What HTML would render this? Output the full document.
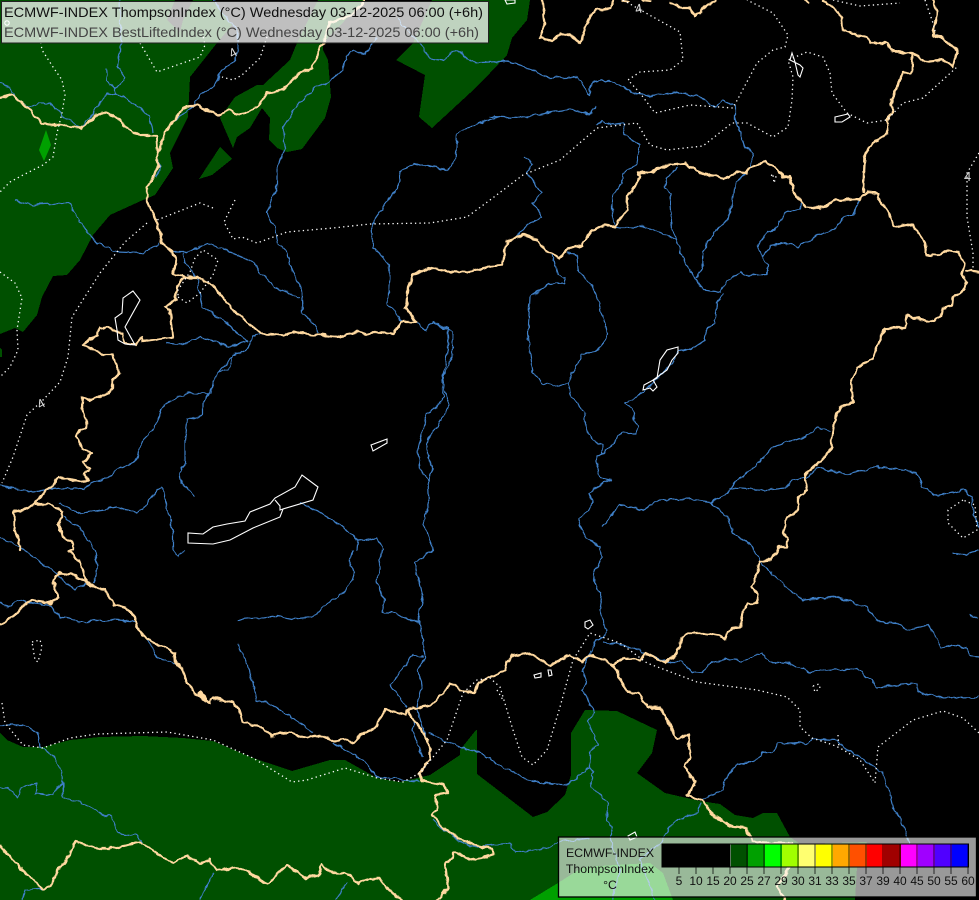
<!DOCTYPE html>
<html lang="en"><head><meta charset="utf-8"><title>ECMWF-INDEX ThompsonIndex</title>
<style>
html,body{margin:0;padding:0;background:#000;width:979px;height:900px;overflow:hidden}
svg{display:block}
text{font-family:"Liberation Sans",sans-serif}
.g{fill:#005000;shape-rendering:crispEdges}
.r{fill:none;stroke:#3f80c8;stroke-width:1.2;stroke-linejoin:round}
.b{fill:none;stroke:#ffd9a0;stroke-width:2.3;stroke-linejoin:round;stroke-linecap:round}
.d{fill:none;stroke:#fff;stroke-width:1.3;stroke-dasharray:1.3 3.2}
.w{fill:none;stroke:#fff;stroke-width:1.1}
.t{font-size:12.3px;fill:#111}
.n{font-size:12px;fill:#111;text-anchor:middle}
</style></head><body>
<svg width="979" height="900" viewBox="0 0 979 900" xmlns="http://www.w3.org/2000/svg">
<defs>
<filter id="wig" filterUnits="userSpaceOnUse" x="0" y="0" width="979" height="900" color-interpolation-filters="sRGB">
<feTurbulence type="fractalNoise" baseFrequency="0.13" numOctaves="2" seed="4" result="n"/>
<feDisplacementMap in="SourceGraphic" in2="n" scale="5" xChannelSelector="R" yChannelSelector="G"/>
</filter>
</defs>
<rect width="979" height="900" fill="#000"/>
<!-- green areas -->
<polygon class="g" points="0,0 175,0 167,20 180,32 183,20 193,0 212,0 232,25 217,43 190,77 188,117 170,153 173,168 155,195 143,200 110,215 93,235 80,260 67,275 53,276 42,297 37,315 23,332 15,328 0,334"/>
<polygon class="g" points="0,348 2,350 2,357 0,357"/>
<polygon fill="#00a000" points="46,130 39,150 44,161 51,145"/>
<polygon class="g" points="318,0 297,43 290,60 263,85 257,85 235,97 220,118 233,148 237,137 250,128 262,108 270,118 269,140 277,148 287,152 302,149 325,118 331,97 328,60 323,50 323,43 365,0"/>
<polygon class="g" points="220,147 232,159 212,175 199,179"/>
<polygon class="g" points="432,0 413,43 396,60 425,75 419,117 432,128 470,93 490,73 507,55 512,38 527,20 530,0"/>
<polygon class="g" points="0,733 7,740 23,747 43,747 70,740 100,737 143,736 183,738 213,741 253,758 292,771 330,760 345,760 377,778 400,782 430,775 460,755 460,750 476,730 477,730 477,774 533,817 547,812 565,795 571,775 571,733 585,710 617,711 657,730 652,753 637,773 665,793 700,801 720,804 735,815 753,818 763,813 777,813 790,837 800,844 867,842 857,867 855,900 0,900"/>
<polygon fill="#00a000" style="shape-rendering:crispEdges" points="530,900 558,883 583,867 650,863 663,873 673,900"/>

<!-- rivers -->
<g class="r" filter="url(#wig)">
<polyline points="0,83 10,87 15,97 28,107 37,103 50,103 62,115 80,128 90,118 100,103 107,93 123,97 140,108 150,117 153,132"/>
<polyline points="120,0 121,43 118,67 125,78 115,88 107,80 106,68"/>
<polyline points="115,88 115,96"/>
<polyline points="213,0 238,33 238,50 235,60 223,70 213,87 200,95 193,107 177,118 170,125 163,140 157,153 160,170 155,177"/>
<polyline points="377,37 365,55 355,50 347,55 343,70 328,82 315,88 300,102 283,127 285,147 277,170 277,190 272,200 267,213 275,230 278,243 288,253 290,265 297,280 302,288 303,313 317,327 318,333"/>
<polyline points="500,117 480,123 457,133 455,160 447,170 413,163 400,173 398,187 388,200 372,223 373,247 390,265 388,303 402,322"/>
<polyline points="397,18 423,47 430,58 443,60 453,51 460,52 473,63 490,62 507,61 527,68 550,78 577,77 590,95 592,83 610,80 633,93 653,96 677,92 697,96 715,107 722,100 735,107 735,120 740,133 745,147 753,153 747,173 735,182 732,203 728,220 713,233 703,252 702,267 697,278"/>
<polyline points="490,117 520,118 570,109 590,115 596,106"/>
<polyline points="597,125 602,121 610,125 623,123 625,135 640,145 637,163 623,174 622,183 612,197 612,213 615,227"/>
<polyline points="523,157 533,163 527,173 542,193 533,203 542,217 530,223 515,238"/>
<polyline points="615,227 647,227 677,240 682,257 690,270 697,280 703,290 720,292 727,282 740,272 745,275 767,274 768,265 757,247 767,232 775,230 785,213 800,209 801,204"/>
<polyline points="763,257 770,246 790,243 798,247 818,235 833,230 845,217 853,215 860,198"/>
<polyline points="678,167 667,178 665,188 670,193 672,230 677,240"/>
<polyline points="723,293 717,303 715,323 707,328 705,340 693,348 678,352 672,363 653,383 633,400 625,403 632,408 635,420 638,427 635,433 622,433 612,445 603,453 597,457 597,465 600,478 612,480 603,483 590,493 593,502 585,513 578,518 585,537 600,547 602,557 593,575 602,598 600,610 607,630 603,638 595,640 590,655 582,670 587,683 582,690 588,700 590,702 595,713 588,722 598,745 590,750 590,767 582,773 567,785 543,783 523,778 503,767 480,753 460,747 440,738 428,732"/>
<polyline points="552,255 558,275 565,278 565,283 548,284 530,297 528,333 530,350 533,373 543,383 557,387 568,382 572,398 585,412 585,427 590,437 602,445 602,453"/>
<polyline points="568,253 577,255 578,270 592,285 600,307 607,333 605,343 597,350 582,355 568,382"/>
<polyline points="603,527 620,505 643,510 660,500 690,499 710,502 727,493 740,478 757,465 773,447 805,437 818,427 830,432"/>
<polyline points="730,488 767,490 785,488 792,480 807,478 818,467 847,474 877,467 917,472 922,487 938,496 963,490 972,497 973,513 979,527"/>
<polyline points="710,502 727,517 733,533 753,547 760,562 777,578 793,593 803,600 837,597 867,607 878,622 897,623 907,630 928,625 942,648 952,645 967,648 970,656 979,657"/>
<polyline points="952,553 962,555 979,551"/>
<polyline points="970,615 979,618"/>
<polyline points="603,642 623,645 645,653 667,662 682,662 692,672 702,673 710,663 727,659 742,661 762,653 770,662 790,663 810,672 833,670 858,669 877,687 917,683 918,692 940,698 979,697"/>
<polyline points="700,800 722,790 725,780 737,763 753,762 762,753 772,752 778,744 800,743 808,744 813,739 837,740 843,747 867,762 882,772 888,787 893,808 900,817 907,837 912,858"/>
<polyline points="0,485 33,492 47,490 67,488 85,490 90,483 107,478 117,470 135,462 143,440 153,430 165,403 187,393 210,394 217,373 230,367 233,355 247,350 252,337 260,334"/>
<polyline points="217,373 232,357"/>
<polyline points="213,385 203,403 203,415 188,420 185,440 185,463 180,475 182,483 195,497"/>
<polyline points="167,343 182,345 200,337 230,347 248,342"/>
<polyline points="15,200 33,205 70,203 80,223 97,243 117,252 143,253 160,243"/>
<polyline points="162,243 172,252 187,252 207,243 230,252 253,262 260,272 275,287 300,298"/>
<polyline points="183,253 185,263 197,278 200,297 203,308 217,317 227,323 240,335 248,342"/>
<polyline points="417,323 425,330 433,321 447,328 448,347 443,380 445,393 450,405 443,417 428,440 428,457 433,468 428,480 429,507 423,520 433,550 415,563 423,597 418,620 423,640 425,657 418,670 422,685 417,707 422,727 428,740"/>
<polyline points="433,321 453,333 452,357 442,380 443,397 437,407 427,413 418,450 420,470 428,480"/>
<polyline points="382,550 377,583 385,600 382,612 393,612 407,620 420,622"/>
<polyline points="353,550 350,563 355,573 347,590 330,602 322,607 313,617 293,619 277,616 237,620"/>
<polyline points="238,644 250,670 257,700 273,705 295,720 313,732"/>
<polyline points="333,743 363,760 377,777 420,782"/>
<polyline points="423,656 413,655 390,685 407,707"/>
<polyline points="300,503 320,512 337,523 358,540 377,538 383,550"/>
<polyline points="358,540 357,550"/>
<polyline points="163,487 173,533 173,550"/>
<polyline points="163,487 157,490 147,505 137,512 117,507 80,513 60,503"/>
<polyline points="63,517 80,528 95,550 97,567 93,583"/>
<polyline points="0,537 20,547 23,550 43,563 75,590 87,583"/>
<polyline points="0,602 8,607 20,600 27,602 50,605 60,617 80,622 113,620 135,622"/>
<polyline points="147,640 157,657 175,664"/>
<polyline points="173,550 178,557 185,550"/>
<polyline points="0,725 23,725 38,733 40,747 55,757 62,773 63,797 87,805 100,813 112,817 118,833 135,835 143,842"/>
<polyline points="0,788 8,787 18,798 20,788 37,783 35,793 53,795 57,788 63,783 63,797"/>
<polyline points="213,873 200,900"/>
<polyline points="43,888 25,890 22,900"/>
<polyline points="347,883 335,900"/>
<polyline points="590,650 582,673"/>
<polyline points="590,767 593,773 590,783 608,805 607,820 613,827 610,837 620,870 612,900"/>
<polyline points="700,803 698,813 673,822 663,840 640,860 655,900"/>
<polyline points="415,720 412,730 423,757"/>
<polyline points="432,820 460,842 472,847 510,843 515,852 547,848 558,842 590,838"/>
</g>

<!-- country borders -->
<g class="b" filter="url(#wig)">
<polyline points="0,98 12,95 28,108 42,123 80,128 88,124 95,115 107,113 118,118 125,127 140,135 156,135 157,153 158,167 147,188 147,200 153,213 158,225 162,243 172,252 176,260 174,274 185,277 177,287 176,300 165,307 170,312 171,323 173,337 157,340 143,342 142,337 135,345 125,343 122,333 115,331 107,327 99,328 98,335 88,340 83,345 97,351 103,355 113,355 115,363 120,373 113,380 113,388 108,393 97,398 90,400 83,397 82,408 87,422 86,427 80,430 77,437 82,449 92,453 83,463 90,468 83,473 89,480 80,481 58,477 53,486 45,491 33,505 23,510 14,512 14,530 20,540 20,550"/>
<polyline points="33,505 50,504 63,512 59,525 63,537 73,543 73,550 68,550 80,563 87,583"/>
<polyline points="157,153 170,125 183,108 197,105 218,115 230,110 240,115 258,107 267,93 283,90 297,75 312,68 317,57 323,42 330,22 347,17 362,5 363,0"/>
<polyline points="185,277 197,277 213,285 233,310 260,333 283,335 293,332 300,333 337,337 359,332 367,334 377,332 393,333 402,322 417,322 406,308 408,287 413,275 428,268 447,271 470,272 490,266 502,265 508,240 523,235 538,240 545,250 560,258 570,248 582,245 592,230 605,225 615,227 627,210 628,197 640,177 638,173 647,173 667,165 685,163 693,168 703,175 717,175 723,180 737,172 747,173 748,167 765,162 775,167 783,177 790,176 793,190 805,207 820,208 837,200 860,199 867,192 878,193 877,197 887,210 895,227 912,224 925,243 927,255 937,256 948,250 958,252 965,263 962,275 967,282 965,290 953,297 952,305 943,308 940,317 927,322 907,315 905,328 885,328 875,350 873,358 857,368 851,383 853,402 840,408 835,418 832,437 832,447 823,459 805,475 807,490 798,497 798,510 787,518 783,533 788,539 787,547 777,547 777,553 770,560 760,562 758,570 752,587 758,595 757,603 748,603 743,613 740,627 732,628 725,639 720,636 703,633 690,633 682,637 677,653 665,663 645,653 640,660 625,657 613,665 605,660 589,655 582,662 570,655 550,665 528,653 513,655 507,662 505,670 478,683 475,692 465,692 450,683 443,693 430,705 408,710 405,715 385,709 375,728 362,734 353,743 347,740 333,741 320,735 303,738 290,732 278,733 272,737 263,728 243,722 240,710 232,702 212,698 210,703 202,698 195,693 187,682 183,670 176,663 175,653 147,639 137,628 135,617 127,608 115,605 105,590 87,583 72,574 60,573 53,580 58,597 50,603 32,600 22,607 13,617 0,624"/>
<polyline points="200,693 205,699" style="stroke-width:4"/>
<polyline points="863,192 865,155 873,143 888,133 887,120 892,113 892,100 897,87 903,72 912,72 913,53 925,62 943,60 953,67 957,50 942,38 933,35 937,13 933,0"/>
<polyline points="913,53 893,52 887,43 870,43 867,37 843,30 842,17 833,7 823,0"/>
<polyline points="542,0 545,23 540,38 552,41 560,33 570,35 581,43 588,18 597,10 612,8 613,0"/>
<polyline points="670,2 682,8 690,8 695,17 707,5 717,0"/>
<polyline points="623,1 628,2"/><polyline points="643,1 650,2"/><polyline points="805,0 808,3"/>
<polyline points="967,271 979,273"/>
<polyline points="0,846 17,865 42,888 50,887 58,870 70,855 75,842 97,848 115,848 140,842 160,855 173,863 187,856 200,864 210,860 217,870 240,868 267,884 287,865 307,878 318,875 322,865 333,873 347,873 358,883 370,878 380,878 385,887 400,898 402,900"/>
<polyline points="407,710 428,740 430,758 420,773 422,780 443,785 448,793 435,795 438,810 432,815 448,832 467,843 493,849 494,854 482,858 470,860 457,852 453,852 453,858 445,863 448,888 437,900"/>
<polyline points="613,665 627,692 638,693 648,707 660,708 670,725 677,740 688,735 690,757 685,767 695,782 688,795 702,800 713,815 733,827 745,828 753,842 765,843 793,843 790,867 777,887 785,900"/>
</g>

<!-- dotted contours -->
<g class="d">
<polyline points="40,38 42,50 53,67 62,80 65,95 62,113 57,133 53,157 43,165 23,175 10,182 0,192"/>
<polyline points="140,43 157,72 177,65 200,57 205,45 203,36"/>
<polyline points="267,37 260,58 242,75 233,80 222,77"/>
<polyline points="0,272 15,283 22,298 17,330 18,350 10,367 0,377"/>
<polyline points="147,223 125,242 100,273 72,317 68,357 60,382 43,400 27,415 13,457 2,483"/>
<polyline points="213,208 200,203 157,220"/>
<polyline points="235,200 224,222 233,239 242,237 257,243 287,232 333,228 370,224 430,223 467,217 490,200 523,175 560,160 597,128 637,123 650,145 667,150 703,146 732,123 747,123 773,137 788,127 792,100 793,77 788,60 807,52 823,57 830,73 832,93 847,113 867,123 887,120 903,103 923,98 957,67"/>
<polyline points="623,0 653,17 680,32 683,60 670,70 640,72 628,80 640,93 655,113 690,105 733,108 757,63 773,50 785,47 788,35 773,13 747,0"/>
<polyline points="833,0 860,6 900,3"/>
<polyline points="925,0 933,23 936,35"/>
<polyline points="979,153 967,173 967,217 973,253 973,270"/>
<polyline points="771,175 776,177 774,183 773,175"/>
<polyline points="178,297 187,303 200,293 213,275 218,260 203,250 195,258 190,272 178,290 178,297"/>
<polyline points="963,500 948,510 948,523 963,538 977,530 975,505 963,500"/>
<polyline points="32,642 40,640 42,647 38,662 35,660 32,642"/>
<polyline points="2,703 5,723 23,745 43,748 70,738 97,734 167,732 213,740 253,758 292,782 307,780 345,768 377,778 403,782 420,773 447,740 463,693 477,680 490,678 500,687 513,730 522,757 533,765 547,750 560,707 573,660 590,633 620,643 647,663 697,682 757,690 787,697 800,710 800,727 812,738 833,745 840,748 860,760 875,783 878,747 913,720 943,711 963,718 979,733"/>
<polyline points="838,735 839,748"/>
<polyline points="497,690 503,700"/>
<polyline points="813,686 819,684 820,688 815,692 813,686"/>
</g>

<!-- lakes / thin white -->
<g class="w">
<polygon points="188,533 188,543 213,544 230,540 253,528 280,517 283,509 313,500 318,487 302,475 295,487 275,498 270,504 250,512 245,521 227,524 213,527 203,534"/>
<polyline points="275,500 280,506 280,510 283,509"/>
<polygon points="133,291 123,298 122,313 115,318 117,330 118,340 125,344 135,345 125,327 140,300"/>
<polygon points="371,445 387,439 387,443 373,451"/>
<polygon points="792,53 790,60 800,65 803,68 800,77 798,75 795,62"/>
<polygon points="835,117 848,114 850,117 842,122 835,122"/>
<polygon points="678,347 667,350 660,360 657,378 644,385 643,390 650,388 653,391 657,387 653,380 667,370 672,360 678,353"/>
<polygon points="585,622 590,620 593,625 588,629 585,627"/>
<polygon points="534,675 541,673 541,677 535,678"/>
<polygon points="548,670 551,670 552,675 549,676"/>
<polygon points="628,836 635,832 637,837 630,840"/>
<polygon points="505,0 507,4 515,3 515,0"/>
<circle cx="7" cy="23" r="2.2"/>
</g>
<text x="229" y="57" font-size="13" fill="#ddd" transform="rotate(-30 233 52)">4</text>
<text x="37" y="408" font-size="13" fill="#ddd" transform="rotate(-30 41 403)">4</text>
<text x="635" y="13" font-size="13" fill="#ddd" transform="rotate(-10 639 8)">4</text>
<text x="964" y="181" font-size="13" fill="#ddd">4</text>

<!-- title panel -->
<rect x="1.5" y="1.5" width="487" height="41.5" fill="#fff" fill-opacity=".75" stroke="#222" stroke-width="1"/>
<text x="4" y="17" font-size="14" fill="#111" textLength="479" lengthAdjust="spacingAndGlyphs">ECMWF-INDEX ThompsonIndex (°C) Wednesday 03-12-2025 06:00 (+6h)</text>
<text x="4" y="37" font-size="14" fill="#444" textLength="475" lengthAdjust="spacingAndGlyphs">ECMWF-INDEX BestLiftedIndex (°C) Wednesday 03-12-2025 06:00 (+6h)</text>

<!-- legend -->
<rect x="558.5" y="837" width="418" height="60" fill="#fff" fill-opacity=".6" stroke="#000" stroke-width="1.3"/>
<text class="t" x="610" y="857" text-anchor="middle">ECMWF-INDEX</text>
<text class="t" x="610" y="873" text-anchor="middle">ThompsonIndex</text>
<text class="t" x="610" y="889" text-anchor="middle">°C</text>
<g style="shape-rendering:crispEdges">
<rect x="662" y="844" width="68" height="23" fill="#000"/>
<rect x="731" y="844" width="17" height="23" fill="#005000"/>
<rect x="748" y="844" width="17" height="23" fill="#00a000"/>
<rect x="765" y="844" width="17" height="23" fill="#00ff00"/>
<rect x="782" y="844" width="17" height="23" fill="#a0ff00"/>
<rect x="799" y="844" width="17" height="23" fill="#ffff70"/>
<rect x="816" y="844" width="17" height="23" fill="#ffff00"/>
<rect x="833" y="844" width="17" height="23" fill="#ffa800"/>
<rect x="850" y="844" width="17" height="23" fill="#ff5000"/>
<rect x="867" y="844" width="17" height="23" fill="#ff0000"/>
<rect x="884" y="844" width="17" height="23" fill="#a00000"/>
<rect x="901" y="844" width="17" height="23" fill="#ff00ff"/>
<rect x="918" y="844" width="17" height="23" fill="#a000ff"/>
<rect x="935" y="844" width="17" height="23" fill="#5000ff"/>
<rect x="952" y="844" width="17" height="23" fill="#0000ff"/>
<rect x="662" y="844" width="306.5" height="23" fill="none" stroke="#000" stroke-width="1"/>
<path d="M679 844V874M696 844V874M713 844V874M730 844V874M747 844V874M764 844V874M781 844V874M798 844V874M815 844V874M832 844V874M849 844V874M866 844V874M883 844V874M900 844V874M917 844V874M934 844V874M951 844V874M968 844V874" stroke="#000" stroke-width="1" stroke-opacity=".75"/>
</g>
<text class="n" x="679" y="885">5</text><text class="n" x="696" y="885">10</text><text class="n" x="713" y="885">15</text><text class="n" x="730" y="885">20</text><text class="n" x="747" y="885">25</text><text class="n" x="764" y="885">27</text><text class="n" x="781" y="885">29</text><text class="n" x="798" y="885">30</text><text class="n" x="815" y="885">31</text><text class="n" x="832" y="885">33</text><text class="n" x="849" y="885">35</text><text class="n" x="866" y="885">37</text><text class="n" x="883" y="885">39</text><text class="n" x="900" y="885">40</text><text class="n" x="917" y="885">45</text><text class="n" x="934" y="885">50</text><text class="n" x="951" y="885">55</text><text class="n" x="968" y="885">60</text>
</svg>
</body></html>
